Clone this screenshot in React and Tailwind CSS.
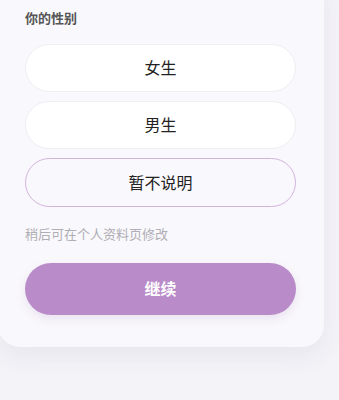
export default function App() {
  const options = ['女生', '男生', '暂不说明']
  const selected = '暂不说明'

  return (
    <div
      className="min-h-screen h-[400px] overflow-hidden bg-[#f4f3f8]"
      style={{ fontFamily: 'Inter, "Noto Sans CJK SC", sans-serif' }}
    >
      {/* Card (scrolled so its top sits above the viewport) */}
      <div className="-mt-[21px] ml-[-2px] w-[326px] rounded-b-[22px] bg-[#f9f8fc] pl-[27px] pr-[28px] pt-[30px] pb-[32px] shadow-[0_10px_24px_rgba(90,70,120,0.07)]">
        <div className="text-[13px] font-semibold leading-[18px] text-[#555]">你的性别</div>

        <div className="mt-[17px] flex flex-col gap-[9px]">
          {options.map((opt) => (
            <button
              key={opt}
              className={
                opt === selected
                  ? 'h-[49px] w-full rounded-full border border-[#d3b3dc] bg-[#f9f8fc] text-[16px] text-[#222]'
                  : 'h-[48px] w-full rounded-full border border-[#efeef3] bg-white text-[16px] text-[#222]'
              }
            >
              {opt}
            </button>
          ))}
        </div>

        <p className="mt-[18px] text-[13px] leading-[18px] text-[#b0aeb5]">稍后可在个人资料页修改</p>

        <button className="mt-[20px] h-[52px] w-full rounded-full bg-[#b98bc8] text-[16px] font-bold text-white shadow-[0_4px_10px_rgba(150,110,170,0.15)]">
          继续
        </button>
      </div>
    </div>
  )
}
